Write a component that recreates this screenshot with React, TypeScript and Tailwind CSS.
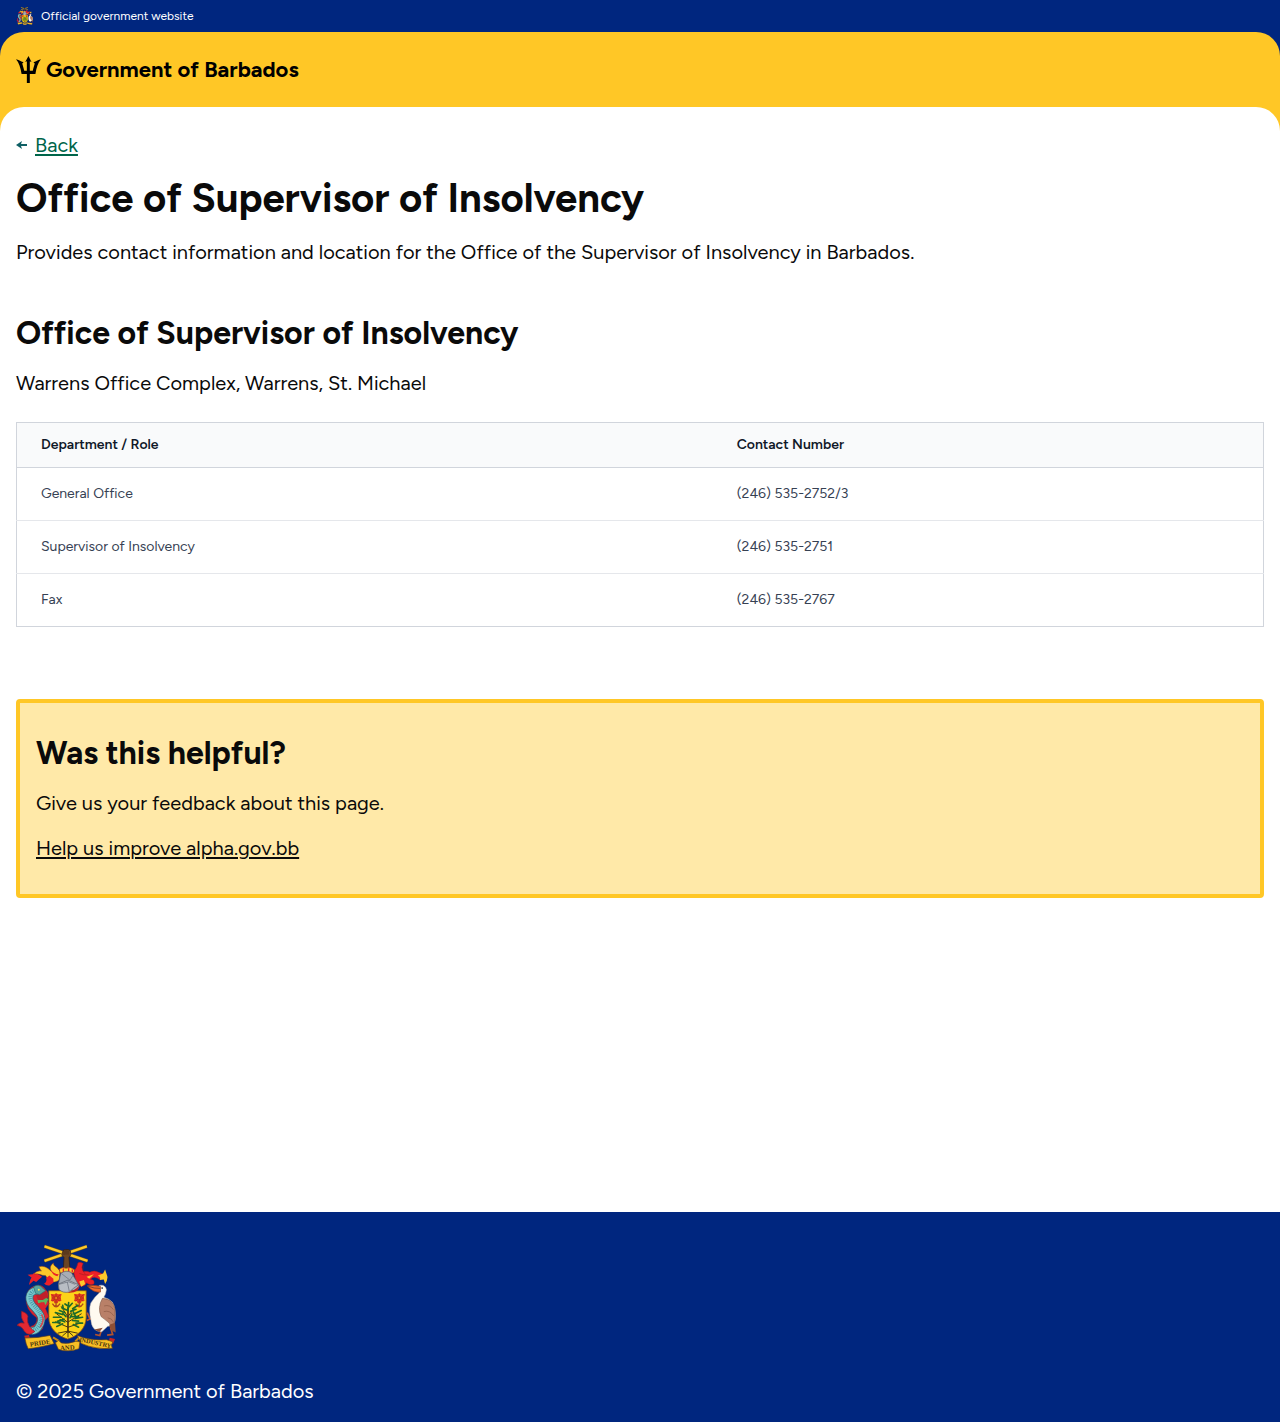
import React from "react";

const contacts = [
  { role: "General Office", phone: "(246) 535-2752/3" },
  { role: "Supervisor of Insolvency", phone: "(246) 535-2751" },
  { role: "Fax", phone: "(246) 535-2767" },
];

function CoatOfArms({ className, motto = false }: { className: string; motto?: boolean }) {
  return (
    <svg viewBox="24 27 300 326" className={className} role="img" aria-label="Coat of arms of Barbados">
      {/* crest: arm holding crossed sugar canes */}
      <g strokeLinecap="butt">
        <path d="M109 34 L239 78 M237 34 L109 78" stroke="#7a5a12" strokeWidth="10" />
        <path d="M109 34 L239 78 M237 34 L109 78" stroke="#fcc92a" strokeWidth="7" />
      </g>
      <path d="M164 50 q2-7 9-6 q9-2 14 3 l2 12 -6 9 3 34 h-20 l2-34 -7-8z" fill="#6b4423" stroke="#2e1a0c" strokeWidth="2" />
      <path d="M168 48v12 M174 46v13 M180 47v12" stroke="#2e1a0c" strokeWidth="1.5" />
      {/* mantling */}
      <path d="M58 120 L74 118 Q80 110 90 118 L102 126 92 134 84 142 76 138 62 151 66 136 70 128Z" fill="#ec2028" />
      <path d="M156 110 C148 94 136 96 136 84 C126 92 124 100 130 110 C122 102 108 90 92 96 C96 100 94 104 100 108 C90 108 82 110 78 118 C92 114 100 124 112 122 C118 128 116 134 122 140 C134 144 148 142 154 134Z" fill="#fcc92a" stroke="#8f3b12" strokeWidth="1.5" />
      <path d="M108 146 Q118 142 114 130 L124 122 136 132 136 144 124 152 Q114 154 108 146Z M128 104 Q136 118 152 118 L148 124 Q132 122 128 104Z" fill="#ec2028" />
      <path d="M196 108 Q206 104 210 84 Q216 80 226 86 Q218 96 226 110 Q238 108 246 112 Q260 104 276 114 L290 120 278 136 Q258 120 248 134 Q262 134 258 148 Q246 154 236 144 Q232 156 216 154 L204 140Z" fill="#ec2028" stroke="#a31d1b" strokeWidth="1.5" />
      <path d="M292 104 L286 116 270 122 Q280 126 276 136 L288 134 292 148 Q302 132 298 122Z M214 140 l14-4 4 12 -12 8z M236 126 l22-8 -14 14z" fill="#fcc92a" />
      <path d="M226 92 q-6 16 6 26 M214 116 q14 6 28 4" fill="none" stroke="#8f1e1a" strokeWidth="1.5" />
      <path d="M154 103 q10-8 20-3 q14-6 26 5 l-2 9 q-22 5-42 0z" fill="#fcc92a" stroke="#9c2318" strokeWidth="2" />
      <path d="M166 101v12 M182 100v12 M193 104v8" stroke="#ec2028" strokeWidth="4" />
      {/* helmet */}
      <path d="M158 116 Q174 104 190 113 L204 136 214 154 Q210 171 196 172 Q176 176 153 164 L151 148Z" fill="#a8adb5" stroke="#565b66" strokeWidth="2" />
      <path d="M160 116l26 20 10-16" fill="none" stroke="#7b818d" strokeWidth="3" />
      {/* shield */}
      <path d="M122 168 H235 V248 C235 282 209 305 179 314 C149 305 122 282 122 248Z" fill="#fcd319" stroke="#8b4c17" strokeWidth="2.5" />
      <path d="M151 148 L180 136 212 150 Q196 160 184 172 Q164 176 153 164Z" fill="#b9bdc4" stroke="#565b66" strokeWidth="2" />
      <path d="M152 149l30-8 20 8 M178 142l6 28" fill="none" stroke="#626875" strokeWidth="2" />
      <path d="M214 153 Q212 177 178 174 Q200 168 214 153Z" fill="#bd1d26" />
      {/* pride of Barbados flowers */}
      {[144, 214].map((x) => (
        <g key={x} transform={`translate(${x} 190)`}>
          <path d="M-16-12 L-4-11 0-14 6-11 17-12 14-2 16 9 7 10 5 16H-5L-7 10-16 9-13 0Z" fill="#e23a20" />
          <path d="M-13-10L12 10 M13-10L-12 10 M0-14V13 M-14 0H14" stroke="#8f2517" strokeWidth="1.5" />
          <circle r="3" fill="#f5931d" />
          <path d="M0 12V24 M-11 17Q0 36 12 17" fill="none" stroke="#b04a1a" strokeWidth="4" />
        </g>
      ))}
      {/* bearded fig tree */}
      <g fill="none" stroke="#4a3512" strokeLinecap="round">
        <path d="M180 294 V220" strokeWidth="5" />
        <path d="M180 278 L142 262 M180 264 L146 238 M180 248 L160 216 M181 278 L216 266 M181 262 L220 238 M180 246 L204 214" strokeWidth="3" />
        <path d="M180 290 L150 296 M180 290 L164 304 M180 288 L180 308 M180 290 L194 303 M180 290 L208 296" strokeWidth="3" />
      </g>
      <g fill="none" stroke="#1d6a2a" strokeWidth="5" strokeLinecap="round">
        <path d="M180 228 L182 204 M180 214L171 208 M182 218L193 206 M176 226L162 220 M170 234L154 228 M166 222L164 212" />
        <path d="M188 230L204 224 M194 222L210 212 M198 238L220 228 M190 246L212 246 M202 252L224 248" />
        <path d="M164 240L142 234 M160 248L136 248 M168 254L148 260 M156 264L134 264 M164 268L146 276 M170 262L156 256" />
        <path d="M194 258L212 260 M204 266L224 266 M196 270L212 278 M186 250L192 238 M174 246L164 236 M202 244l-6-12" />
      </g>
      {/* dolphin supporter */}
      <path d="M80 154 Q100 146 112 164 Q126 176 116 196 L123 206 112 222 122 246 106 262 104 282 Q82 308 56 290 L68 276 Q88 270 86 250 Q50 226 54 188 Q57 160 80 154Z" fill="#d9252f" stroke="#8f1e2a" strokeWidth="1.5" />
      <path d="M92 170 C64 162 56 190 72 212 C94 235 110 250 92 276 C84 290 70 294 60 284" fill="none" stroke="#2f6575" strokeWidth="23" />
      <path d="M92 170 C64 162 56 190 72 212 C94 235 110 250 92 276 C84 290 70 294 60 284" fill="none" stroke="#7cc8cc" strokeWidth="19" />
      <path d="M88 170 C66 164 60 190 76 210 C98 234 110 250 92 274 C84 286 72 290 62 284" fill="none" stroke="#3f8fa0" strokeWidth="13" strokeDasharray="2 4" />
      <path d="M100 240 Q112 256 96 278" fill="none" stroke="#d04a50" strokeWidth="5" />
      <path d="M86 188 Q101 181 121 193 L112 212 99 203 91 211Z" fill="#5ab65b" />
      <path d="M84 180 L114 170 120 186 104 196 88 196Z" fill="#c01f2a" />
      <path d="M76 156 Q92 145 104 160 L112 168 94 180 82 176Z" fill="#58a59f" stroke="#246c6d" strokeWidth="2" />
      <circle cx="92" cy="165" r="3" fill="#f8e45c" />
      <path d="M88 206 l20-4 6 14 -10 12z" fill="#d9252f" />
      <path d="M40 230 Q64 238 58 252 Q56 264 64 276 Q72 287 80 291 Q62 308 48 290 Q43 276 26 272 Q35 262 48 266 Q36 250 40 230Z" fill="#e32832" stroke="#8f1e2a" strokeWidth="2" />
      {/* pelican supporter */}
      <path d="M280 290 L276 303 262 300 M308 278 l7 22 -17 2" fill="none" stroke="#b4532d" strokeWidth="5" />
      <path d="M257 258 L245 250 238 234 M249 252l-12 6" fill="none" stroke="#bc5930" strokeWidth="5" />
      <path d="M274 152 Q293 148 296 165 Q294 180 288 188 Q319 195 322 226 Q326 256 318 274 L300 275 282 292 Q251 291 249 255 Q242 225 249 205 Q262 184 275 174 Q268 168 266 163Z" fill="#fffaf0" stroke="#bdb7ae" strokeWidth="1.5" />
      <path d="M284 191 Q316 192 322 223 Q325 249 318 282 Q304 262 280 246 Q268 218 284 191Z" fill="#b98068" stroke="#694334" strokeWidth="1.5" />
      <path d="M289 214 Q307 209 317 225 M288 231 Q307 226 318 244 M300 250 Q312 250 318 264" fill="none" stroke="#8b5a45" strokeWidth="2" />
      <path d="M304 271 l18-6 2 29 -12-5z M259 285l26-5-10 13z" fill="#8d4f35" />
      <path d="M238 153 Q257 150 278 155 L278 172 Q257 175 238 153Z" fill="#ef6a2c" stroke="#943a1c" strokeWidth="2" />
      <path d="M239 154 Q260 162 277 161" fill="none" stroke="#55332a" strokeWidth="2" />
      <circle cx="283" cy="160" r="2.5" fill="#111" />
      {/* motto ribbon */}
      <path d="M48 304 l14-2 4 12 -14 4z M306 310l16 4-6 14-14-4z" fill="#c52526" />
      <path d="M135 309l16 10-4 12 M216 307l-12 12 8 8" fill="none" stroke="#c98a14" strokeWidth="6" />
      <path d="M50 311 Q90 311 126 303 L138 328 Q92 340 60 343 L54 329Z" fill="#f9bf24" stroke="#654013" strokeWidth="2" />
      <path d="M208 303 Q244 319 297 316 L315 322 311 333 314 342 Q262 346 220 327Z" fill="#f9bf24" stroke="#654013" strokeWidth="2" />
      <path d="M142 325 L152 318 160 326 Q180 330 203 321 L216 322 213 343 Q180 355 151 345Z" fill="#f9bf24" stroke="#654013" strokeWidth="2" />
      {motto && (
        <g fontFamily="Liberation Serif, serif" fontWeight="700" fontSize="20" fill="#4a3510">
          <text x="66" y="337" transform="rotate(-9 66 337)">PRIDE</text>
          <text x="157" y="348" transform="rotate(-4 157 348)">AND</text>
          <text x="213" y="321" fontSize="19" transform="rotate(12 213 321)">INDUSTRY</text>
        </g>
      )}
    </svg>
  );
}

function Trident() {
  return (
    <svg viewBox="48 168 76 82" className="h-[27px] w-[25px]" fill="#000" aria-hidden="true">
      <path d="M86 168 L95 186 L90 184 V213 H99 C101 203 104 196 105 191 L101 187 C110 184 117 180 124 178 C115 188 110 204 107 223 H90 V250 H81 V223 H65 C62 204 57 188 48 178 C55 180 62 184 71 187 L67 191 C68 196 71 203 73 213 H81 V184 L76 186Z" />
    </svg>
  );
}

export default function App() {
  return (
    <div className="flex min-h-screen flex-col bg-white font-['Figtree','Lato',sans-serif] text-xl leading-[30px] text-[#0a0a0a] antialiased">
      <div className="flex h-8 items-center gap-2 bg-[#00267f] px-4 text-xs text-white">
        <CoatOfArms className="h-[18px] w-[17px]" />
        <span>Official government website</span>
      </div>

      <header className="bg-[#00267f]">
        <div className="rounded-t-3xl bg-[#ffc726] px-4 py-6">
          <a href="#" className="flex h-[27px] w-fit items-center gap-[5px] text-[22px] font-bold text-black">
            <Trident />
            <span>Government of Barbados</span>
          </a>
        </div>
      </header>

      <div className="flex flex-1 flex-col bg-[#ffc726]">
        <main className="flex-1 rounded-t-3xl bg-white px-4 pt-6 pb-16">
          <a href="#" className="flex w-fit items-center gap-2 leading-7 text-[#00654a]">
            <svg viewBox="0 0 11 8" className="h-2 w-[11px]" fill="#0e5f64" aria-hidden="true">
              <path d="M0 4 L6 0 L5 3 H11 V5 H5 L6 8Z" />
            </svg>
            <span className="underline decoration-2 underline-offset-2">Back</span>
          </a>
          <h1 className="mt-4 text-[40px] leading-[46px] font-bold">Office of Supervisor of Insolvency</h1>
          <p className="mt-4">Provides contact information and location for the Office of the Supervisor of Insolvency in Barbados.</p>

          <h2 className="mt-12 text-[32px] leading-[37px] font-bold">Office of Supervisor of Insolvency</h2>
          <p className="mt-4">Warrens Office Complex, Warrens, St. Michael</p>

          <table className="mt-6 w-full border-collapse border border-[#d1d5dc] text-left text-sm">
            <thead>
              <tr className="border-b border-[#d1d5dc] bg-[#f9fafb] text-[#101828]">
                <th scope="col" className="px-6 py-3 font-semibold">Department / Role</th>
                <th scope="col" className="px-6 py-3 font-semibold">Contact Number</th>
              </tr>
            </thead>
            <tbody className="divide-y divide-gray-200 text-[#364153]">
              {contacts.map((c) => (
                <tr key={c.role}>
                  <td className="px-6 py-4">{c.role}</td>
                  <td className="px-6 py-4">{c.phone}</td>
                </tr>
              ))}
            </tbody>
          </table>

          <section className="mt-18 rounded border-4 border-[#ffc726] bg-[#ffe9a8] px-4 py-8">
            <h2 className="text-[32px] leading-[37px] font-bold">Was this helpful?</h2>
            <p className="mt-4">Give us your feedback about this page.</p>
            <a href="#" className="mt-4 block w-fit leading-7 underline decoration-2 underline-offset-2">Help us improve alpha.gov.bb</a>
          </section>
        </main>
      </div>

      <footer className="bg-[#00267f] px-4 pt-8 pb-4 text-white">
        <CoatOfArms className="h-[108px] w-[100px]" motto />
        <p className="mt-6">© 2025 Government of Barbados</p>
      </footer>
    </div>
  );
}
